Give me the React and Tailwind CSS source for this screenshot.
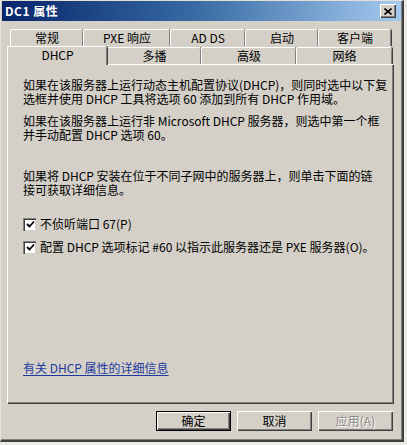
import React from 'react';

const font = { fontFamily: '"Noto Sans CJK SC", "Liberation Sans", sans-serif' };

function Tab({ label, w }) {
  return (
    <div
      className={`${w} h-[17px] bg-[#d4d0c8] border-t border-l border-white rounded-t-[2px] shadow-[inset_-1px_0_0_#808080,1px_0_0_#404040] flex items-center justify-center text-[12px] leading-none text-black`}
    >
      {label}
    </div>
  );
}

function Checkbox({ label, className }) {
  return (
    <div className={`flex items-center h-[16px] ${className}`}>
      <div className="w-[13px] h-[13px] bg-white border-t border-l border-[#808080] shadow-[inset_1px_1px_0_#404040,inset_-1px_-1px_0_#d4d0c8] flex items-center justify-center">
        <svg width="9" height="9" viewBox="0 0 9 9">
          <path d="M1 4 L3.5 6.5 L8 1.5" stroke="#000" strokeWidth="1.8" fill="none" />
        </svg>
      </div>
      <span className="ml-[4px] text-[12px] leading-[14px] whitespace-nowrap">{label}</span>
    </div>
  );
}

function Button({ label, def, disabled }) {
  return (
    <div
      className={`w-[75px] h-[20px] bg-[#d4d0c8] flex items-center justify-center text-[12px] leading-none ${
        def
          ? 'border border-black shadow-[inset_1px_1px_0_#fff,inset_-1px_-1px_0_#404040,inset_-2px_-2px_0_#808080]'
          : 'shadow-[inset_1px_1px_0_#fff,inset_-1px_-1px_0_#404040,inset_-2px_-2px_0_#808080]'
      } ${disabled ? 'text-[#8c8a84] [text-shadow:1px_1px_0_#fff]' : 'text-black'}`}
    >
      {label}
    </div>
  );
}

export default function App() {
  return (
    <div className="w-[407px] h-[445px] bg-[#ecebe8]" style={font}>
      <div className="w-[404px] h-[442px] bg-[#d4d0c8] border-l border-t border-[#e4e0d8] border-r-2 border-b-2 border-r-[#404040] border-b-[#404040] shadow-[inset_-1px_-1px_0_#808080] flex flex-col">
        {/* Title bar */}
        <div className="h-[20px] mx-[1px] bg-gradient-to-r from-[#0a246a] via-[#3a6ea5] to-[#a6caf0] flex items-center justify-between pl-[3px] pr-[5px]">
          <span className="text-white font-bold text-[12px] leading-none tracking-[0.5px]">DC1 属性</span>
          <div className="w-[16px] h-[14px] bg-[#d4d0c8] shadow-[inset_1px_1px_0_#fff,inset_-1px_-1px_0_#404040,inset_-2px_-2px_0_#808080] flex items-center justify-center">
            <svg width="8" height="7" viewBox="0 0 8 7">
              <path d="M0.5 0.5 L7.5 6.5 M7.5 0.5 L0.5 6.5" stroke="#000" strokeWidth="1.6" />
            </svg>
          </div>
        </div>

        <div className="flex flex-col pl-[6px] pr-[9px] text-black">
          {/* Tabs row 1 */}
          <div className="flex mt-[8px] ml-[3px]">
            <Tab label="常规" w="w-[73px]" />
            <Tab label="PXE 响应" w="w-[87px]" />
            <Tab label="AD DS" w="w-[75px]" />
            <Tab label="启动" w="w-[73px]" />
            <Tab label="客户端" w="w-[73px]" />
          </div>
          {/* Tabs row 2 */}
          <div className="flex items-end h-[18px]">
            <div className="relative z-10 w-[100px] h-[19px] -mb-[1px] bg-[#d4d0c8] border-t border-l border-white rounded-t-[2px] shadow-[inset_-1px_0_0_#808080,1px_0_0_#404040] flex items-start pt-[2px] justify-center text-[12px] leading-none">
              DHCP
            </div>
            <Tab label="多播" w="w-[94px]" />
            <Tab label="高级" w="w-[95px]" />
            <Tab label="网络" w="w-[96px]" />
          </div>

          {/* Panel */}
          <div className="h-[339px] border-t border-l border-white shadow-[inset_-1px_-1px_0_#808080,1px_1px_0_#404040] pl-[15px] pt-[13px] flex flex-col">
            <p className="text-[12px] leading-[14px] whitespace-nowrap">
              如果在该服务器上运行动态主机配置协议(DHCP)，则同时选中以下复
              <br />
              选框并使用 DHCP 工具将选项 60 添加到所有 DHCP 作用域。
            </p>
            <p className="mt-[8px] text-[12px] leading-[14px] whitespace-nowrap">
              如果在该服务器上运行非 Microsoft DHCP 服务器，则选中第一个框
              <br />
              并手动配置 DHCP 选项 60。
            </p>
            <p className="mt-[27px] text-[12px] leading-[14px] whitespace-nowrap">
              如果将 DHCP 安装在位于不同子网中的服务器上，则单击下面的链
              <br />
              接可获取详细信息。
            </p>
            <Checkbox label="不侦听端口 67(P)" className="mt-[19px]" />
            <Checkbox label="配置 DHCP 选项标记 #60 以指示此服务器还是 PXE 服务器(O)。" className="mt-[7px]" />
            <a className="mt-[106px] text-[12px] leading-[14px] text-[#1c3a9e] underline underline-offset-2 w-fit">
              有关 DHCP 属性的详细信息
            </a>
          </div>

          {/* Buttons */}
          <div className="flex justify-end gap-[6px] mt-[8px]">
            <Button label="确定" def />
            <Button label="取消" />
            <Button label="应用(A)" disabled />
          </div>
        </div>
      </div>
    </div>
  );
}
